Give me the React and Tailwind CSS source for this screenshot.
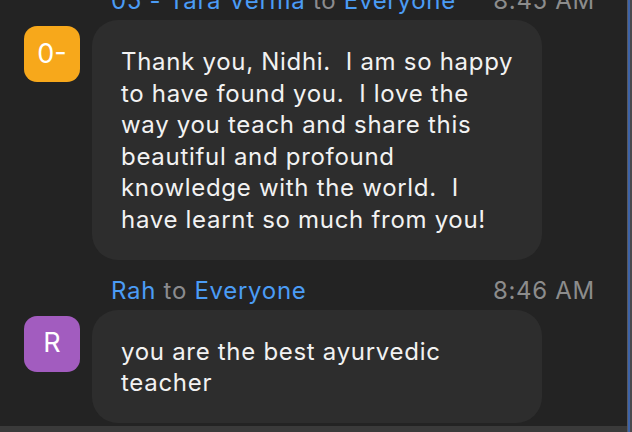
const messages = [
  {
    id: 1,
    from: "05 - Tara Verma",
    time: "8:45 AM",
    initials: "0-",
    avatar: "bg-[#f7a81b]",
    lines: [
      "Thank you, Nidhi.  I am so happy",
      "to have found you.  I love the",
      "way you teach and share this",
      "beautiful and profound",
      "knowledge with the world.  I",
      "have learnt so much from you!",
    ],
  },
  {
    id: 2,
    from: "Rah",
    time: "8:46 AM",
    initials: "R",
    avatar: "bg-[#a25cbf]",
    lines: ["you are the best ayurvedic", "teacher"],
  },
];

const ChatMessage = ({ message }) => {
  return (
    <div className="flex flex-col">
      <div className="flex h-[28px] flex-row items-center justify-between pl-[87px] pr-[13px] text-[24px] leading-[28px] tracking-[0.7px]">
        <div className="whitespace-nowrap">
          <span className="text-[#4b9cf5]">{message.from}</span>
          <span className="text-[#8b8b8e]"> to </span>
          <span className="text-[#4b9cf5]">Everyone</span>
        </div>
        <span className="text-[#8c8c8c]">{message.time}</span>
      </div>
      <div className="mt-[5px] flex flex-row items-start">
        <div
          className={`mt-[6px] flex h-[56px] w-[56px] shrink-0 items-center justify-center rounded-[13px] text-[27px] text-white ${message.avatar}`}
        >
          {message.initials}
        </div>
        <div className="ml-[12px] w-[450px] rounded-[26px] bg-[#2d2d2d] pb-[24px] pl-[29px] pr-[16px] pt-[26px] text-[24px] leading-[31.6px] tracking-[0.7px] text-[#f2f2f2]">
          {message.lines.map((line, index) => (
            <span key={index} className="block whitespace-pre">
              {line}
            </span>
          ))}
        </div>
      </div>
    </div>
  );
};

export default function App() {
  return (
    <div
      className="relative h-[432px] w-[632px] overflow-hidden bg-[#232323]"
      style={{ fontFamily: 'Inter, "Liberation Sans", Arial, sans-serif' }}
    >
      <div className="mt-[-13px] flex flex-col gap-[17px] pl-[24px] pr-[24px]">
        {messages.map((message) => (
          <ChatMessage key={message.id} message={message} />
        ))}
      </div>
      <div className="absolute bottom-0 left-0 h-[6px] w-full bg-[#3a3a3a]" />
      <div className="absolute right-0 top-0 flex h-full w-[5px] flex-row">
        <div className="w-[1px] bg-[#5a5a5e]" />
        <div className="w-[2px] bg-[#3d63a8]" />
        <div className="w-[2px] bg-[#4a4a4e]" />
      </div>
    </div>
  );
}
